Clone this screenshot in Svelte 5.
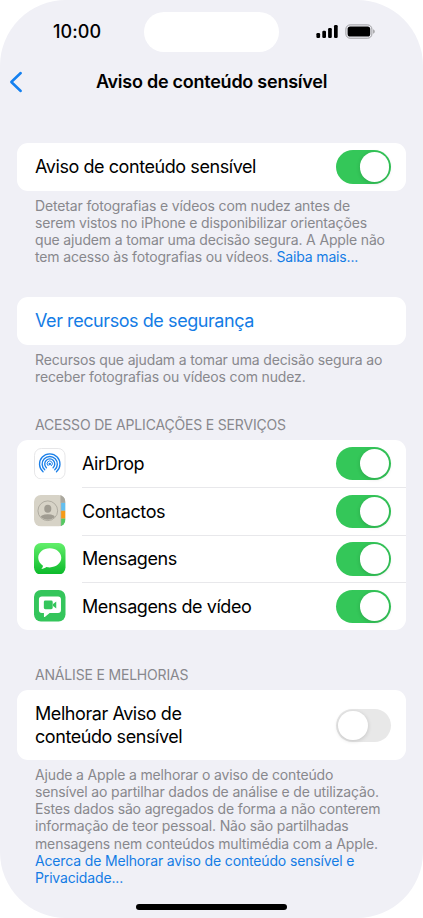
<script>
  let warning = $state(true);
  let improve = $state(false);

  let apps = $state([
    { id: "airdrop", name: "AirDrop", on: true },
    { id: "contacts", name: "Contactos", on: true },
    { id: "messages", name: "Mensagens", on: true },
    { id: "video", name: "Mensagens de vídeo", on: true }
  ]);
</script>

{#snippet toggle(on, label, change)}
  <button class="toggle" class:on role="switch" aria-checked={on} aria-label={label} onclick={change}>
    <span class="knob"></span>
  </button>
{/snippet}

{#snippet appIcon(id)}
  <svg class="app-icon" viewBox="0 0 32 32">
    {#if id === "airdrop"}
      <rect x="0.5" y="0.5" width="31" height="31" rx="7" fill="#fff" stroke="#e6e6e8" />
      <g fill="none" stroke="#1a7fe8" stroke-width="1.35" stroke-linecap="round">
        <path d="M9.2 24.2a10.4 10.4 0 1 1 13.6 0" />
        <path d="M10.9 22.1a7.7 7.7 0 1 1 10.2 0" />
        <path d="M12.6 20a5.1 5.1 0 1 1 6.8 0" />
        <path d="M14.3 18a2.7 2.7 0 1 1 3.4 0" stroke-width="1" />
      </g>
      <circle cx="16" cy="16.3" r="1.3" fill="#1a7fe8" />
    {:else if id === "contacts"}
      <clipPath id="contacts-shape"><rect width="32" height="32" rx="7" /></clipPath>
      <clipPath id="contacts-face"><circle cx="14" cy="16" r="9.2" /></clipPath>
      <g clip-path="url(#contacts-shape)">
        <rect width="32" height="32" fill="#d7d3c7" />
        <rect x="27" width="5" height="8" fill="#aaa79e" />
        <rect x="27.4" y="8" width="4.6" height="8" fill="#62bff1" />
        <rect x="27.4" y="16" width="4.6" height="8" fill="#f69a17" />
        <rect x="27.4" y="24" width="4.6" height="8" fill="#54c962" />
        <path d="M27.2 0v32" stroke="#b9b5a9" stroke-width="0.7" />
      </g>
      <circle cx="14" cy="16" r="10" fill="none" stroke="#a5a196" stroke-width="0.8" />
      <g clip-path="url(#contacts-face)" fill="#a09c92">
        <ellipse cx="14" cy="13.9" rx="3.6" ry="4.1" />
        <ellipse cx="14" cy="24.2" rx="8.5" ry="4.6" />
      </g>
    {:else if id === "messages"}
      <linearGradient id="bubble-green" x1="0" y1="0" x2="0" y2="1">
        <stop offset="0" stop-color="#62ef6a" />
        <stop offset="1" stop-color="#0bb92a" />
      </linearGradient>
      <rect width="32" height="32" rx="7" fill="url(#bubble-green)" />
      <path
        fill="#fff"
        d="M16 5.4c-6.5 0-11.7 4.3-11.7 9.7 0 3.3 1.9 6.1 4.8 7.9-.1 1.4-.8 2.5-1.9 3.4 2.1-.1 4-.9 5.4-2 1.1.3 2.2.4 3.4.4 6.5 0 11.7-4.3 11.7-9.7S22.5 5.4 16 5.4z"
      />
    {:else}
      <rect width="32" height="32" rx="7" fill="#34c55b" />
      <path
        fill="#fff"
        d="M8 6.6h16.4a3 3 0 0 1 3 3v10.7a3 3 0 0 1-3 3h-8.5l-4.6 4c-.6.5-1.2.2-1.2-.5v-3.500H8a3 3 0 0 1-3-3V9.6a3 3 0 0 1 3-3z"
      />
      <rect x="10" y="10.7" width="9" height="8.8" rx="1.5" fill="#34c55b" />
      <path fill="#34c55b" d="M19.3 14.100l3.300-2.500v7.200l-3.300-2.500z" />
    {/if}
  </svg>
{/snippet}

<div class="phone">
  <div class="status">
    <span class="time">10:00</span>
    <span class="island"></span>
    <svg class="signals" width="60" height="16" viewBox="0 0 60 16">
      <rect x="0.4" y="9" width="3.7" height="5" rx="1.2" />
      <rect x="6.3" y="6.7" width="3.7" height="7.3" rx="1.2" />
      <rect x="12.1" y="4" width="3.7" height="10" rx="1.2" />
      <rect x="18" y="1" width="3.7" height="13" rx="1.2" />
      <rect x="29.9" y="0.9" width="26" height="13.3" rx="4.2" fill="none" stroke="#9b9b9e" />
      <rect x="31.6" y="2.5" width="22.6" height="10.1" rx="2.6" />
      <path d="M57.2 5.3c2 .8 2 3.7 0 4.5z" fill="#9b9b9e" />
    </svg>
  </div>

  <div class="nav">
    <svg class="back" width="14" height="22" viewBox="0 0 14 22">
      <path d="M11.7 2L2.3 11l9.4 9" fill="none" stroke="#1480f0" stroke-width="2.5" stroke-linecap="round" stroke-linejoin="round" />
    </svg>
    <h1>Aviso de conteúdo sensível</h1>
  </div>

  <section class="first">
    <div class="card row">
      <span class="label">Aviso de conteúdo sensível</span>
      {@render toggle(warning, "Aviso de conteúdo sensível", () => (warning = !warning))}
    </div>
    <p class="note">
      Detetar fotografias e vídeos com nudez antes de<br />
      serem vistos no iPhone e disponibilizar orientações<br />
      que ajudem a tomar uma decisão segura. A Apple não<br />
      tem acesso às fotografias ou vídeos. <span class="link">Saiba mais...</span>
    </p>
  </section>

  <section class="resources">
    <div class="card row">
      <span class="label link">Ver recursos de segurança</span>
    </div>
    <p class="note">
      Recursos que ajudam a tomar uma decisão segura ao<br />
      receber fotografias ou vídeos com nudez.
    </p>
  </section>

  <section class="access">
    <h2>ACESSO DE APLICAÇÕES E SERVIÇOS</h2>
    <div class="card">
      {#each apps as app}
        <div class="app">
          {@render appIcon(app.id)}
          <div class="app-body">
            <span class="label">{app.name}</span>
            {@render toggle(app.on, app.name, () => (app.on = !app.on))}
          </div>
        </div>
      {/each}
    </div>
  </section>

  <section class="analysis">
    <h2>ANÁLISE E MELHORIAS</h2>
    <div class="card row tall">
      <span class="label">Melhorar Aviso de<br />conteúdo sensível</span>
      {@render toggle(improve, "Melhorar Aviso de conteúdo sensível", () => (improve = !improve))}
    </div>
    <p class="note">
      Ajude a Apple a melhorar o aviso de conteúdo<br />
      sensível ao partilhar dados de análise e de utilização.<br />
      Estes dados são agregados de forma a não conterem<br />
      informação de teor pessoal. Não são partilhadas<br />
      mensagens nem conteúdos multimédia com a Apple.<br />
      <span class="link">Acerca de Melhorar aviso de conteúdo sensível e<br />Privacidade...</span>
    </p>
  </section>

  <div class="home"></div>
</div>

<style>
  :global(body) {
    background: #fff;
  }

  .phone {
    display: flex;
    flex-direction: column;
    width: 423px;
    height: 918px;
    box-sizing: border-box;
    background: #f0f0f6;
    border-radius: 66px;
    overflow: hidden;
    font-family: Inter, "Liberation Sans", sans-serif;
    color: #000;
    white-space: nowrap;
  }

  h1, h2, p {
    margin: 0;
  }

  /* STATUS BAR */
  .status {
    display: grid;
    grid-template-columns: 144px 135px 1fr;
    height: 51px;
    padding-top: 12px;
    box-sizing: border-box;
  }

  .time {
    padding-left: 53px;
    font-size: 18px;
    font-weight: 550;
    line-height: 40px;
    letter-spacing: 0.1px;
  }

  .island {
    height: 40px;
    border-radius: 20px;
    background: #fff;
  }

  .signals {
    margin: 12px 0 0 37px;
  }

  /* NAV */
  .nav {
    display: grid;
    grid-template-columns: 40px 1fr 40px;
    align-items: center;
    height: 61px;
  }

  .back {
    margin-left: 9px;
  }

  h1 {
    font-size: 18px;
    font-weight: 570;
    line-height: 24px;
    letter-spacing: -0.25px;
    text-align: center;
  }

  /* GROUPS */
  section {
    padding: 0 17px;
  }

  .first {
    margin-top: 31px;
    height: 154.3px;
  }

  .resources {
    height: 118.7px;
  }

  .access {
    height: 250.3px;
  }

  .card {
    background: #fff;
    border-radius: 11px;
  }

  .row {
    display: flex;
    align-items: center;
    justify-content: space-between;
    height: 47.5px;
    padding: 0 15px 0 18px;
    box-sizing: border-box;
  }

  .tall {
    height: 69.3px;
    padding-top: 1px;
  }

  .label {
    font-size: 18px;
    line-height: 23.7px;
    letter-spacing: -0.43px;
  }

  .note {
    padding: 6px 0 0 18px;
    font-size: 14px;
    line-height: 17.3px;
    letter-spacing: -0.15px;
    color: #88888d;
  }

  .link {
    color: #147ce5;
  }

  h2 {
    height: 24px;
    padding-left: 18px;
    font-size: 14px;
    font-weight: 400;
    line-height: 18px;
    letter-spacing: -0.18px;
    color: #88888d;
  }

  /* APP LIST */
  .app {
    display: flex;
    align-items: center;
    height: 47.4px;
    padding-left: 17px;
  }

  .app-icon {
    width: 31.5px;
    height: 31.5px;
    margin-right: 16.5px;
  }

  .app-body {
    flex: 1;
    display: flex;
    align-items: center;
    justify-content: space-between;
    height: 100%;
    padding-right: 15px;
    box-sizing: border-box;
  }

  .app + .app .app-body {
    border-top: 1px solid #e8e8eb;
  }

  /* TOGGLE */
  .toggle {
    display: flex;
    align-items: center;
    width: 55px;
    height: 33.5px;
    padding: 2px;
    border: 0;
    border-radius: 17px;
    background: #e8e8e8;
  }

  .toggle.on {
    justify-content: flex-end;
    background: #34c759;
  }

  .knob {
    width: 29.5px;
    height: 29.5px;
    border-radius: 50%;
    background: #fff;
    box-shadow: 0 1px 4px rgba(0, 0, 0, 0.16);
  }

  .home {
    width: 151px;
    height: 5.5px;
    margin: auto auto 8.5px;
    border-radius: 3px;
    background: #000;
  }
</style>
